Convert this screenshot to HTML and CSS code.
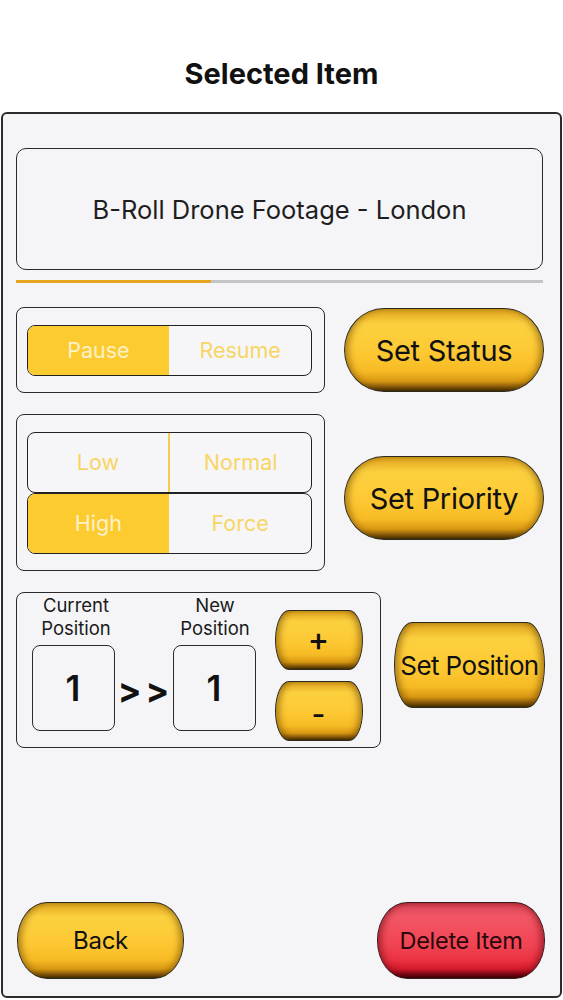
FILE: index.html
```html
<!DOCTYPE html>
<html lang="en">
<head>
<meta charset="utf-8">
<title>Selected Item</title>
<link rel="stylesheet" href="styles.css">
</head>
<body>
<header class="header">
  <h1 class="title">Selected Item</h1>
</header>
<main class="panel">
  <div class="name-box">B-Roll Drone Footage - London</div>
  <div class="progress"><div class="progress-fill" style="width:37%"></div></div>

  <section class="row row-status">
    <div class="group group-status">
      <div class="seg">
        <div class="seg-item on">Pause</div>
        <div class="seg-item">Resume</div>
      </div>
    </div>
    <button class="btn btn-yellow btn-large">Set Status</button>
  </section>

  <section class="row row-priority">
    <div class="group group-priority">
      <div class="seg seg-tall seg-first">
        <div class="seg-item divided">Low</div>
        <div class="seg-item">Normal</div>
      </div>
      <div class="seg seg-tall">
        <div class="seg-item on">High</div>
        <div class="seg-item">Force</div>
      </div>
    </div>
    <button class="btn btn-yellow btn-large btn-priority">Set Priority</button>
  </section>

  <section class="row row-position">
    <div class="group group-position">
      <div class="pos-fields">
        <div class="pos-label label-current">Current<br>Position</div>
        <div class="pos-label label-new">New<br>Position</div>
        <div class="pos-box box-current">1</div>
        <div class="pos-arrow">&gt;&gt;</div>
        <div class="pos-box box-new">1</div>
      </div>
      <div class="steppers">
        <button class="btn btn-yellow btn-step">+</button>
        <button class="btn btn-yellow btn-step btn-minus">-</button>
      </div>
    </div>
    <button class="btn btn-yellow btn-setpos">Set Position</button>
  </section>

  <div class="spacer"></div>

  <footer class="bottom-row">
    <button class="btn btn-yellow btn-bottom">Back</button>
    <button class="btn btn-red btn-bottom btn-delete">Delete Item</button>
  </footer>
</main>
</body>
</html>
```

FILE: styles.css
```css
* { box-sizing: border-box; }

html, body {
  margin: 0;
  padding: 0;
  background: #ffffff;
}

body {
  width: 563px;
  height: 1000px;
  overflow: hidden;
  font-family: Inter, "Noto Sans", "Liberation Sans", sans-serif;
  color: #1a1a1a;
}

.header {
  padding-top: 56px;
  height: 112px;
}

.title {
  margin: 0;
  font-size: 29px;
  line-height: 36px;
  font-weight: 700;
  text-align: center;
  color: #111;
}

.panel {
  margin: 0 1px;
  height: 886px;
  border: 2px solid #2c2c2c;
  border-radius: 6px;
  background: #f5f5f7;
  padding: 34px 15px 17px 13px;
  display: flex;
  flex-direction: column;
}

.name-box {
  height: 122px;
  margin-right: 2px;
  border: 1.5px solid #2a2a2a;
  border-radius: 10px;
  display: flex;
  align-items: center;
  justify-content: center;
  font-size: 25.5px;
  color: #1e1e1e;
}

.progress {
  margin-top: 10px;
  margin-right: 2px;
  height: 3px;
  background: #c4c4c6;
  display: flex;
}

.progress-fill {
  background: #e6a61e;
  height: 100%;
}

.row {
  display: flex;
  align-items: center;
  margin-top: 21px;
}

.row-status { margin-top: 24px; }

.group {
  border: 1.5px solid #2a2a2a;
  border-radius: 8px;
  flex: none;
}

.group-status {
  width: 309px;
  height: 86px;
  padding: 16.5px 12px 0 9.5px;
}

.group-priority {
  width: 309px;
  height: 157px;
  padding: 16.5px 12px 0 9.5px;
}

.seg {
  display: flex;
  height: 51px;
  border: 1.5px solid #222;
  border-radius: 8px;
  overflow: hidden;
  background: #f6f6f8;
}

.seg-tall { height: 61px; }

.seg-item {
  flex: 1;
  display: flex;
  align-items: center;
  justify-content: center;
  font-size: 21.5px;
  color: #f7d565;
}

.seg-item.on {
  background: #fccb30;
  color: #fdf1c8;
}

.seg-item.divided {
  border-right: 2px solid #f5cd4c;
}

.btn {
  font-family: Inter, "Noto Sans", "Liberation Sans", sans-serif;
  color: #111;
  cursor: pointer;
  padding: 0;
  display: flex;
  align-items: center;
  justify-content: center;
  flex: none;
}

.btn-yellow {
  border: 1.5px solid #2e2a1e;
  background: linear-gradient(to bottom,
    #d09a1a 0%,
    #eab42a 7%,
    #fbcf3e 18%,
    #fdce3a 35%,
    #fcc630 58%,
    #f6ba24 76%,
    #d89812 88%,
    #85580a 95%,
    #3a2800 100%);
  box-shadow:
    inset 7px 0 7px -4px rgba(110, 70, 0, 0.6),
    inset -7px 0 7px -4px rgba(110, 70, 0, 0.6);
}

.btn-red {
  border: 1.5px solid #3a1a1e;
  background: linear-gradient(to bottom,
    #c23444 0%,
    #e04a5a 7%,
    #f25666 18%,
    #f24e5e 35%,
    #f04252 58%,
    #ec3242 76%,
    #d21a2c 88%,
    #7a0614 95%,
    #350006 100%);
  box-shadow:
    inset 7px 0 7px -4px rgba(100, 0, 10, 0.55),
    inset -7px 0 7px -4px rgba(100, 0, 10, 0.55);
  color: #2a080c;
}

.btn-large {
  width: 200px;
  height: 84px;
  margin-left: 19px;
  border-radius: 40px / 42px;
  font-size: 29px;
  letter-spacing: -0.3px;
}

.btn-priority { margin-top: 11px; }

.group-position {
  width: 365px;
  height: 156px;
  display: flex;
  align-items: flex-start;
  padding: 1px 0 0 14.5px;
}

.pos-fields {
  display: grid;
  grid-template-columns: 83px 58px 83px;
  grid-template-rows: 47px 86px;
  row-gap: 4px;
}

.pos-label {
  font-size: 18.5px;
  line-height: 23px;
  text-align: center;
  color: #1a1a1a;
  white-space: nowrap;
}

.label-current { grid-column: 1; grid-row: 1; justify-self: center; margin-left: 6px; }
.label-new { grid-column: 3; grid-row: 1; justify-self: center; margin-left: 2px; }

.pos-box {
  grid-row: 2;
  border: 1.5px solid #2a2a2a;
  border-radius: 8px;
  display: flex;
  align-items: center;
  justify-content: center;
  font-size: 35px;
  font-weight: 600;
  color: #111;
}

.box-current { grid-column: 1; }
.box-new { grid-column: 3; }

.pos-arrow {
  grid-column: 2;
  grid-row: 2;
  display: flex;
  align-items: center;
  justify-content: center;
  font-size: 35px;
  font-weight: 700;
  letter-spacing: 4px;
  padding-left: 4px;
  color: #111;
  padding-top: 3px;
}

.steppers {
  margin-left: 19px;
  margin-top: 15.5px;
  display: flex;
  flex-direction: column;
  gap: 11px;
}

.btn-step {
  width: 88px;
  height: 60px;
  border-radius: 14px / 30px;
  font-size: 32px;
  font-weight: 500;
}

.btn-minus { font-size: 30px; padding-top: 6px; }

.btn-setpos {
  width: 151px;
  height: 86px;
  margin-left: 13px;
  margin-bottom: 10px;
  border-radius: 18px / 43px;
  font-size: 26px;
  letter-spacing: -0.6px;
  white-space: nowrap;
}

.spacer { flex: 1; }

.bottom-row {
  display: flex;
  justify-content: space-between;
  padding-left: 1px;
}

.btn-bottom {
  width: 167px;
  height: 77px;
  border-radius: 30px / 38px;
  font-size: 24px;
  letter-spacing: -0.3px;
}

.btn-delete { width: 168px; font-size: 23.5px; }
```
